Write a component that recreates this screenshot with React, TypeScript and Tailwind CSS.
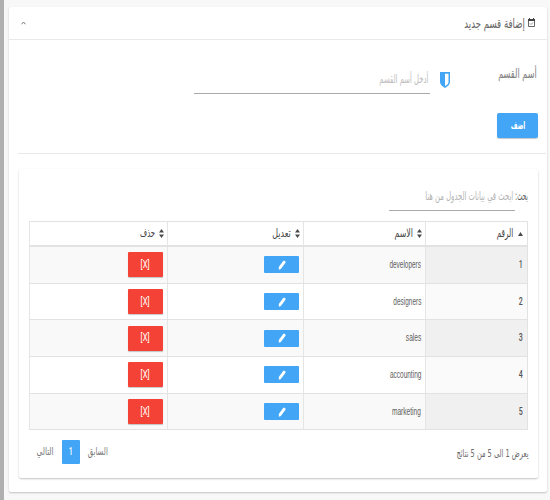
import { useLayoutEffect, useRef, useState } from "react";

type FitProps = { children: string; width: number; className?: string; dir?: "rtl" | "ltr" };

/** Condensed text: squeezes a line horizontally into a given width. */
function Fit({ children, width, className = "", dir = "rtl" }: FitProps) {
  const ref = useRef<HTMLSpanElement>(null);
  const [scale, setScale] = useState(1);
  useLayoutEffect(() => {
    if (ref.current && ref.current.offsetWidth) {
      const range = document.createRange();
      range.selectNodeContents(ref.current);
      setScale((s) => (width * s) / range.getBoundingClientRect().width);
    }
  }, [width, children]);
  return (
    <span dir="rtl" className="flex shrink-0" style={{ width }}>
      <span
        ref={ref}
        dir={dir}
        className={`block shrink-0 origin-right whitespace-nowrap ${className}`}
        style={{ transform: `scaleX(${scale})` }}
      >
        {children}
      </span>
    </span>
  );
}

function SortIcon() {
  return (
    <svg width="5" height="9" viewBox="0 0 5 9" className="shrink-0 fill-[#4a4a4a]">
      <path d="M2.5 0 5 3.500H0ZM0 5.500h5L2.500 9Z" />
    </svg>
  );
}

const rows = [
  { id: "1", name: "developers", width: 31.5 },
  { id: "2", name: "designers", width: 28 },
  { id: "3", name: "sales", width: 15.5 },
  { id: "4", name: "accounting", width: 31.5 },
  { id: "5", name: "marketing", width: 29 },
];

const grid = "grid grid-cols-[102px_122px_136px_138px]";

export default function App() {
  return (
    <div
      dir="rtl"
      className="h-[500px] w-[550px] overflow-hidden border-l-4 border-[#b0b0b0] bg-[#f8f8f8] pr-[3px] pl-[5px] pt-[7px] font-['DejaVu_Sans',sans-serif] text-[10px] leading-[14px] text-[#777]"
    >
      <main className="h-[485px] w-[538px] rounded-[2px] bg-white shadow-[0_1px_2px_rgba(0,0,0,0.22)]">
        <header className="flex h-[33px] items-center justify-between border-b border-[#e9e9e9] pr-[12px] pl-[12px]">
          <div className="flex items-center gap-[3px]">
            <svg width="7" height="9" viewBox="0 0 7 9" className="mb-[2px]">
              <path d="M.5 1.500h6v7h-6z" fill="none" stroke="#666" />
              <path d="M0 1h7v2H0zM1 0h1v2H1zM5 0h1v2H5z" fill="#444" />
              <path d="m2 5.500 1 1 2-2" fill="none" stroke="#777" strokeWidth=".8" />
            </svg>
            <Fit width={60.5} className="pt-[1px] text-[13px] text-[#666]">إضافة قسم جديد</Fit>
          </div>
          <svg width="5" height="4" viewBox="0 0 5 4" className="mb-[1px]">
            <path d="m.5 3.300 2-2.300 2 2.300" fill="none" stroke="#777" />
          </svg>
        </header>

        <section className="h-[113px] pr-[9px]">
          <div className="flex h-[73px]">
            <div className="w-[88px] pt-[27px] pr-[1px]">
              <Fit width={38.5} className="text-[13px] text-[#808080]">أسم القسم</Fit>
            </div>
            <svg width="10" height="16" viewBox="0 0 10 16" className="mt-[32px] shrink-0">
              <path d="M0 0h10v10c0 2.500-2.500 4.700-5 6-2.500-1.300-5-3.500-5-6Z" fill="#42a5f5" />
              <path d="M5 1.800h3.500v8.200c0 1.600-1.500 3-3.500 4Z" fill="white" />
            </svg>
            <div className="mr-[10px] h-[54px] w-[236px] border-b border-[#aaa] pt-[32px] pr-[2px]">
              <Fit width={49} className="text-[11.5px] text-[#bcbcbc]">أدخل أسم القسم</Fit>
            </div>
          </div>
          <button className="flex h-[25px] w-[41px] justify-center rounded-[2px] bg-[#42a5f5] pt-[5px] text-white shadow-[0_1px_1px_rgba(0,0,0,0.22)]">
            <Fit width={14.5} className="text-[10.5px] font-bold">اضف</Fit>
          </button>
        </section>

        <div className="mr-[1px] ml-[9px] border-t border-[#e9e9e9]" />

        <section className="mt-[15px] mr-[9px] h-[309px] w-[519px] rounded-[2px] bg-white px-[10px] pt-[20px] shadow-[0_1px_2px_rgba(0,0,0,0.24)]">
          <div className="flex h-[32px] gap-[1px]">
            <Fit width={12.5} className="text-[11.5px] text-[#555]">بحث:</Fit>
            <div className="h-[22px] w-[126px] border-b border-[#aaa] pr-[1px]">
              <Fit width={88} className="text-[11.5px] text-[#b4b4b4]">ابحث في بيانات الجدول من هنا</Fit>
            </div>
          </div>

          <div className="w-[499px] border-r border-[#e2e2e2] border-t">
            <div className={`${grid} h-[25px] border-b-2 border-[#e2e2e2] text-[#444]`}>
              <div className="flex items-center gap-[5px] border-l border-[#e5e5e5] pr-[4px]">
                <svg width="5" height="4" viewBox="0 0 5 4" className="fill-[#4a4a4a]"><path d="M2.500 0 5 4H0Z" /></svg>
                <Fit width={16.5} className="pb-[2px] text-[11.5px]">الرقم</Fit>
              </div>
              <div className="flex items-center gap-[4px] border-l border-[#e5e5e5] pr-[3px]">
                <SortIcon />
                <Fit width={18.5} className="pb-[2px] text-[11.5px]">الاسم</Fit>
              </div>
              <div className="flex items-center gap-[4px] border-l border-[#e5e5e5] pr-[3px]">
                <SortIcon />
                <Fit width={18.5} className="pb-[2px] text-[11.5px]">تعديل</Fit>
              </div>
              <div className="flex items-center gap-[4px] border-l border-[#e5e5e5] pr-[3px]">
                <SortIcon />
                <Fit width={15} className="pb-[2px] text-[11.5px]">حذف</Fit>
              </div>
            </div>
            {rows.map((row, i) => (
              <div
                key={row.id}
                className={`${grid} h-[36.7px] items-stretch border-b border-[#e2e2e2] font-['Liberation_Sans',sans-serif] ${i % 2 ? "bg-white" : "bg-[#f9f9f9]"}`}
              >
                <div className={`flex items-center border-l border-[#e5e5e5] pr-[4px] text-[#555] ${i % 2 ? "bg-[#fafafa]" : "bg-[#f0f0f0]"}`}>
                  <Fit width={4} className="font-['Roboto',sans-serif] text-[10px] font-medium">{row.id}</Fit>
                </div>
                <div className="flex items-center border-l border-[#e5e5e5] pr-[4px]">
                  <Fit width={row.width} dir="ltr" className="text-[10px] text-[#606060]">{row.name}</Fit>
                </div>
                <div className="flex items-center border-l border-[#e5e5e5] pr-[4px]">
                  <button className="flex h-[17px] w-[35px] items-center justify-center rounded-[1px] bg-[#42a5f5]">
                    <svg width="8" height="10" viewBox="0 0 8 10">
                      <path d="M.8 9.500V7L5 1.300 6 .5 7.500 1.600V2.700L3 8.700 2 9.500Z" fill="white" />
                    </svg>
                  </button>
                </div>
                <div className="flex items-center border-l border-[#e5e5e5] pr-[4px]">
                  <button className="flex h-[25px] w-[35px] items-center justify-center rounded-[1px] bg-[#f44336] text-white shadow-[0_1px_1px_rgba(0,0,0,0.22)]">
                    <Fit width={9} dir="ltr" className="font-['Roboto',sans-serif] text-[10px]">[X]</Fit>
                  </button>
                </div>
              </div>
            ))}
          </div>

          <footer className="flex items-start justify-between pt-[10px] pl-[8px]">
            <div className="pt-[7px]">
              <Fit width={72} className="text-[11px] text-[#6c6c6c]">يعرض 1 الى 5 من 5 نتائج</Fit>
            </div>
            <nav className="flex items-center gap-[8px]">
              <Fit width={20} className="text-[11px]">السابق</Fit>
              <span className="flex h-[24px] w-[18px] items-center justify-center rounded-[1px] bg-[#42a5f5] text-white">
                <Fit width={4} className="font-['Roboto',sans-serif] text-[10px] font-medium">1</Fit>
              </span>
              <Fit width={17} className="text-[11px]">التالي</Fit>
            </nav>
          </footer>
        </section>
      </main>
    </div>
  );
}
